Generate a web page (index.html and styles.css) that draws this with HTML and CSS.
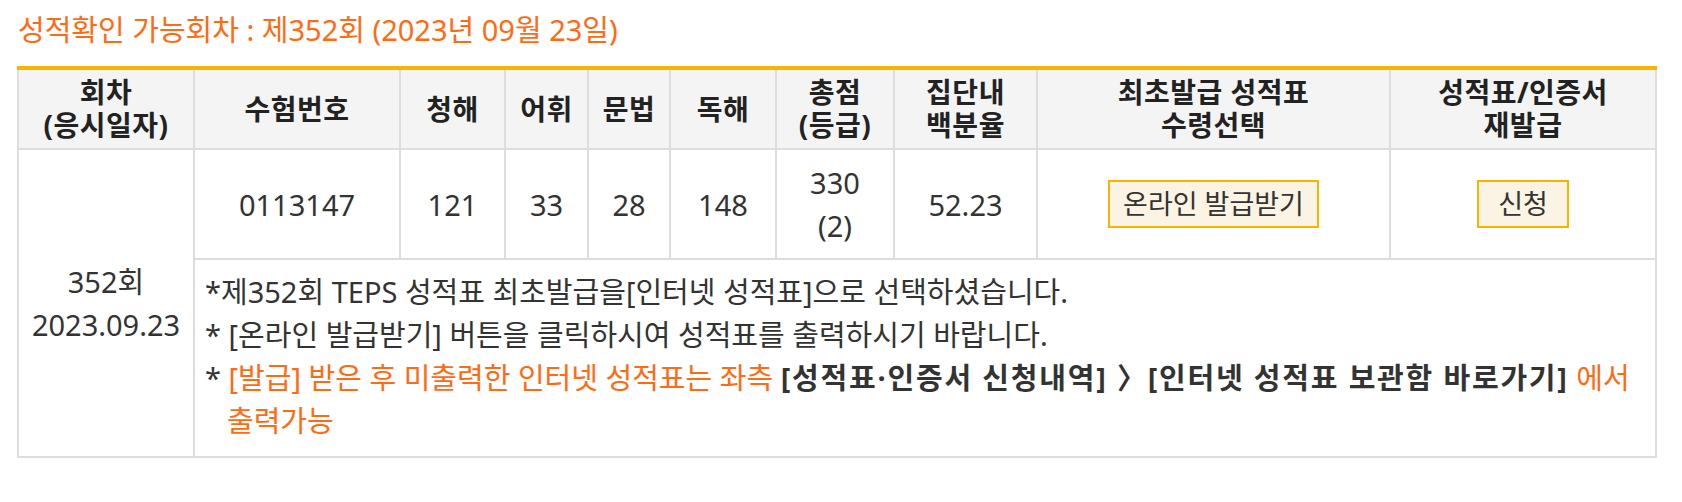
FILE: index.html
```html
<!DOCTYPE html>
<html lang="ko">
<head>
<meta charset="utf-8">
<title>성적확인</title>
<link rel="stylesheet" href="styles.css">
</head>
<body>
<div class="page">
  <h2 class="title">성적확인 가능회차 : 제352회 (2023년 09월 23일)</h2>
  <table class="score">
    <colgroup>
      <col class="c-round">
      <col class="c-num">
      <col class="c-lc">
      <col class="c-voc">
      <col class="c-gr">
      <col class="c-rc">
      <col class="c-total">
      <col class="c-pct">
      <col class="c-first">
      <col class="c-re">
    </colgroup>
    <thead>
      <tr>
        <th>회차<br>(응시일자)</th>
        <th>수험번호</th>
        <th>청해</th>
        <th>어휘</th>
        <th>문법</th>
        <th>독해</th>
        <th>총점<br>(등급)</th>
        <th>집단내<br>백분율</th>
        <th>최초발급 성적표<br>수령선택</th>
        <th>성적표/인증서<br>재발급</th>
      </tr>
    </thead>
    <tbody>
      <tr class="data">
        <td rowspan="2" class="round">352회<br>2023.09.23</td>
        <td>0113147</td>
        <td>121</td>
        <td>33</td>
        <td>28</td>
        <td>148</td>
        <td>330<br>(2)</td>
        <td>52.23</td>
        <td><span class="btn">온라인 발급받기</span></td>
        <td><span class="btn btn-short">신청</span></td>
      </tr>
      <tr>
        <td colspan="9" class="notes">
          <p class="note">*제352회 TEPS 성적표 최초발급을[인터넷 성적표]으로 선택하셨습니다.</p>
          <p class="note hang">* [온라인 발급받기] 버튼을 클릭하시여 성적표를 출력하시기 바랍니다.</p>
          <p class="note hang">* <span class="hl">[발급] 받은 후 미출력한 인터넷 성적표는 좌측</span> <strong class="path">[성적표·인증서 신청내역] 〉[인터넷 성적표 보관함 바로가기]</strong> <span class="hl">에서<br>출력가능</span></p>
        </td>
      </tr>
    </tbody>
  </table>
</div>
</body>
</html>
```

FILE: styles.css
```css
html, body {
  margin: 0;
  padding: 0;
  background: #fff;
}

body {
  font-family: "Noto Sans", "Noto Sans CJK KR", sans-serif;
  color: #333;
}

.page {
  padding: 12px 25px 40px 17px;
}

.title {
  margin: 0 0 18px 1px;
  font-size: 29px;
  font-weight: 400;
  line-height: 36px;
  color: #ff6a13;
}

.score {
  width: 1640px;
  table-layout: fixed;
  border-collapse: collapse;
  border: 2px solid #dddddd;
  border-top: 4px solid #f7b400;
  font-size: 29px;
}

.c-round { width: 176px; }
.c-num { width: 206px; }
.c-lc { width: 105px; }
.c-voc { width: 83px; }
.c-gr { width: 82px; }
.c-rc { width: 106px; }
.c-total { width: 118px; }
.c-pct { width: 143px; }
.c-first { width: 353px; }
.c-re { width: 266px; }

.score th,
.score td {
  border: 2px solid #dddddd;
  text-align: center;
  vertical-align: middle;
  padding: 0;
}

.score thead th {
  border-top: 4px solid #f7b400;
  background: #f4f4f4;
  color: #222;
  font-size: 28px;
  font-weight: 700;
  height: 78px;
  line-height: 33px;
  letter-spacing: 0.5px;
}

.score .data td {
  height: 108px;
  line-height: 43px;
  color: #333;
}

.score .round {
  line-height: 43px;
  color: #333;
}

.btn {
  display: inline-block;
  padding: 0 13px;
  border: 2px solid #f7b400;
  background: #fbf3e4;
  color: #333;
  font-size: 27px;
  line-height: 44px;
}

.btn-short {
  padding: 0 19px;
}

.score td.notes {
  text-align: left;
  vertical-align: top;
  padding: 10px 20px 14px 10px;
  line-height: 43px;
  color: #333;
  height: 172px;
}

.note {
  margin: 0;
}

.note.hang {
  padding-left: 22px;
  text-indent: -22px;
}

.hl {
  color: #ff6a13;
}

.path {
  font-weight: 700;
  color: #333;
  letter-spacing: 1.8px;
}
```
